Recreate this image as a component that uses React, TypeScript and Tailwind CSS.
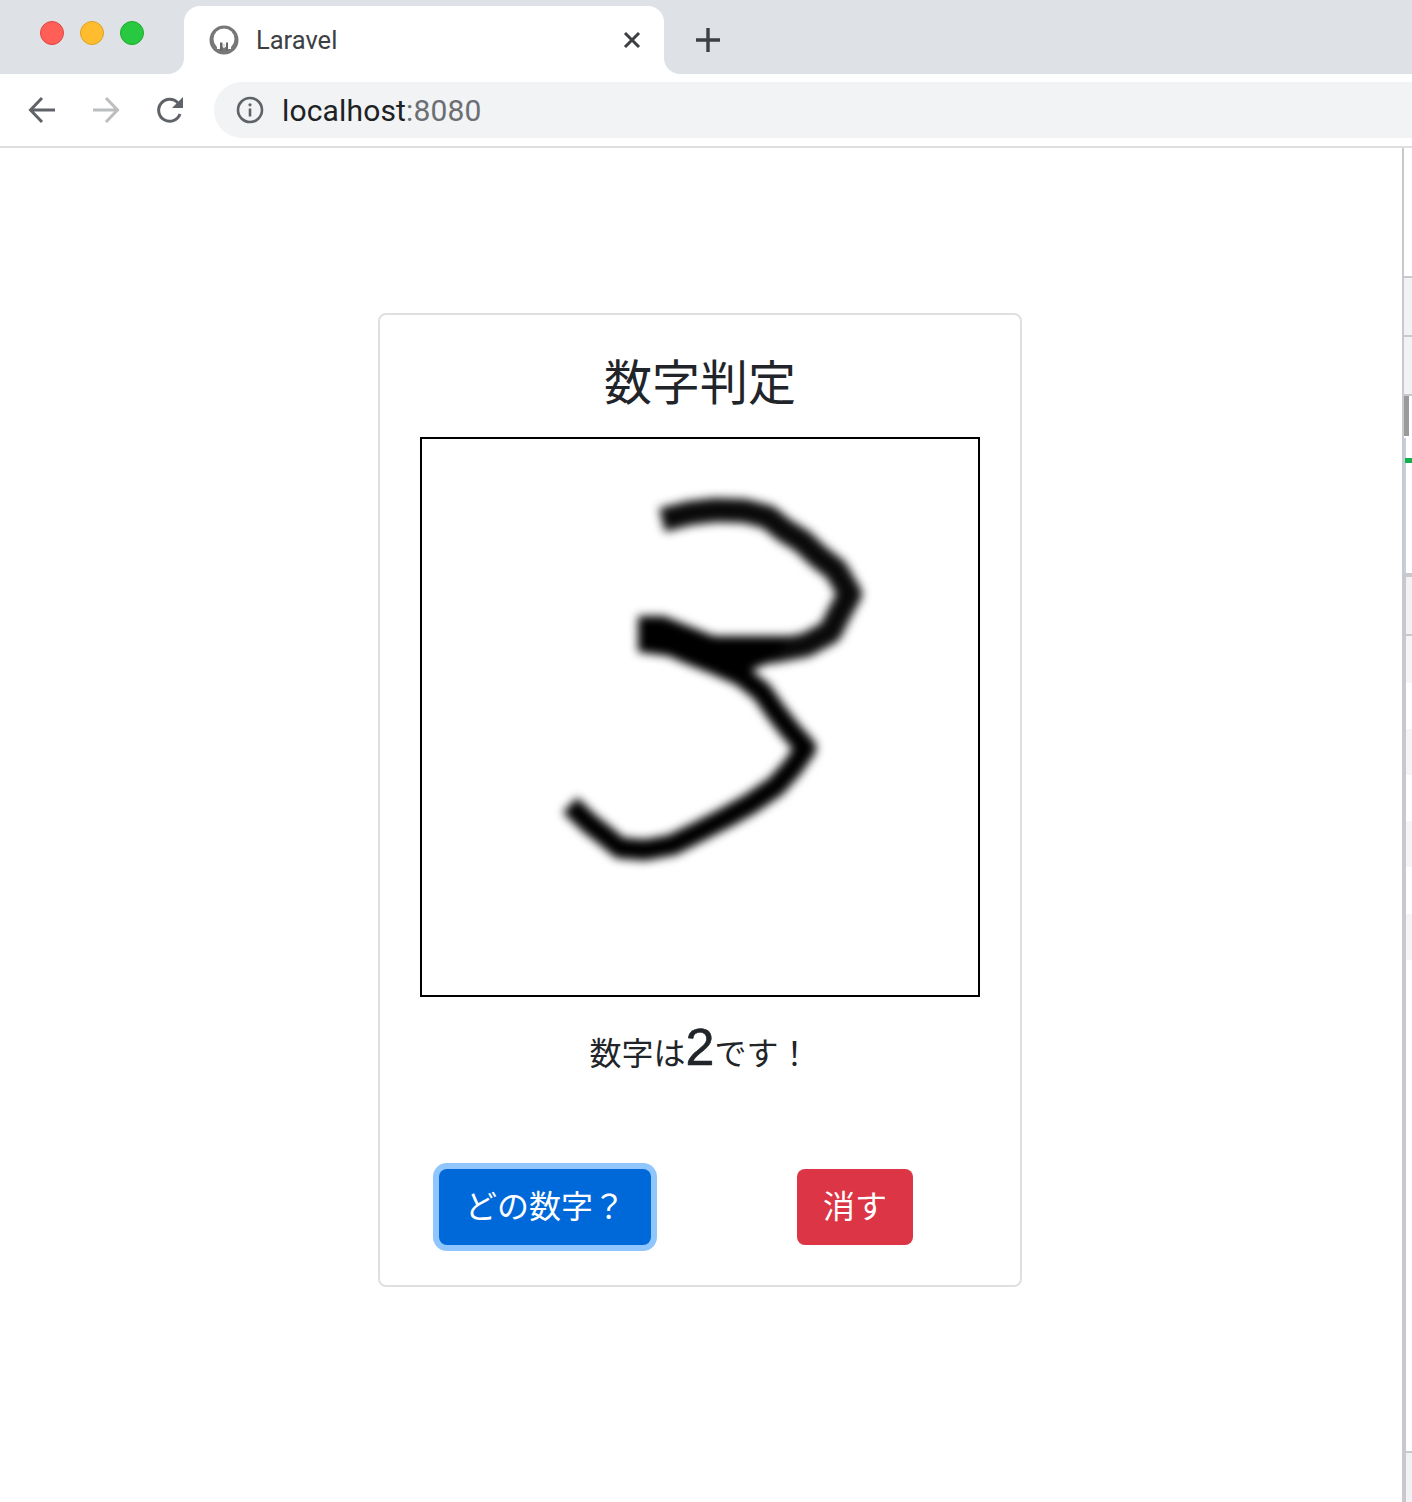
const sansJp = "font-['Liberation_Sans','Noto_Sans_CJK_JP',sans-serif]";

const Favicon = () => (
  <svg width="32" height="32" viewBox="0 0 32 32" className="blur-[0.5px]">
    <circle cx="16" cy="16" r="14.500" fill="#777" />
    <circle cx="16" cy="15" r="10.500" fill="#fff" />
    <path d="M6 23h20l-2 4-8 2-8-2z" fill="#777" />
    <path d="M9 19h3v6H9zM20 19h3v6h-3z" fill="#fff" />
    <path d="M12 18.500h2.500v8H12zM18 18.500h2v8h-2z" fill="#666" />
    <path d="M15 20h2v4h-2z" fill="#ddd" />
  </svg>
);

const ArrowLeft = () => (
  <svg width="28" height="28" viewBox="0 0 28 28" fill="none" stroke="#5f6368" strokeWidth="3">
    <path d="M27 14H3M14 2 2.500 14 14 26" />
  </svg>
);

const ArrowRight = () => (
  <svg width="28" height="28" viewBox="0 0 28 28" fill="none" stroke="#bcbdbf" strokeWidth="3">
    <path d="M1 14h24M14 2l11.500 12L14 26" />
  </svg>
);

const Reload = () => (
  <svg width="28" height="28" viewBox="0 0 28 28" fill="none">
    <path d="M24 18a11 11 0 1 1-2-11" stroke="#5f6368" strokeWidth="3" />
    <path d="M27 1v11H16z" fill="#5f6368" />
  </svg>
);

const Info = () => (
  <svg width="28" height="28" viewBox="0 0 28 28" fill="none">
    <circle cx="14" cy="14" r="12" stroke="#5f6368" strokeWidth="2.600" />
    <path d="M14 12.500V20.500" stroke="#5f6368" strokeWidth="2.600" />
    <circle cx="14" cy="8.800" r="1.600" fill="#5f6368" />
  </svg>
);

const HandwrittenThree = () => (
  <svg width="556" height="556" viewBox="422 439 556 556" fill="none" className="blur-[5px]">
    <polyline
      points="662,520 690,513 716,510 745,511 768,517 784,530 802,541 818,556 836,570 850,594 840,612 830,632 806,645 775,651 747,652 715,651 690,646 650,634"
      stroke="#0a0a0a"
      strokeWidth="24"
      strokeLinejoin="round"
    />
    <polyline
      points="650,636 685,652 715,664 742,676 762,692 776,712 790,730 806,748 792,768 776,786 750,804 725,818 698,832 672,845 645,850 620,848 603,834 590,824 570,805"
      stroke="#000"
      strokeWidth="21"
      strokeLinejoin="round"
    />
    <path d="M638 616h26l50 20 76 0-18 26-36 14-36-16-62-8z" fill="#000" />
  </svg>
);

const SideRail = () => (
  <div className="w-[12px] pl-[2px] flex flex-col">
    <div className="h-[128px] border-l-[2px] border-[#c8c9ce]" />
    <div className="h-[59px] border-l-[2px] border-t-[2px] border-[#c8c9ce] bg-[#f1f2f4]" />
    <div className="h-[59px] border-l-[2px] border-t-[2px] border-[#c8c9ce] bg-[#f1f2f4]" />
    <div className="h-[42px] border-l-[2px] border-t-[2px] border-[#c8c9ce] pr-[3px]">
      <div className="h-[40px] bg-[#9a9a9a]" />
    </div>
    <div className="h-[137px] border-l-[2px] border-[#c8c9ce] pt-[2px]">
      <div className="h-[135px] border-l-[2px] border-[#c3cfe3] pt-[20px]">
        <div className="h-[5px] bg-[#0fb14d] -ml-[1px]" />
      </div>
    </div>
    <div className="flex-1 border-l-[4px] border-[#c8c9ce] flex flex-col">
      <div className="h-[4px] bg-[#c8c9ce]" />
      <div className="h-[57px] bg-[#f2f2f3]" />
      <div className="h-[2px] bg-[#c8c9ce]" />
      <div className="h-[47px] bg-[#f5f5f5]" />
      <div className="h-[46px]" />
      <div className="h-[46px] bg-[#f5f5f5]" />
      <div className="h-[46px]" />
      <div className="h-[46px] bg-[#f5f5f5]" />
      <div className="h-[47px]" />
      <div className="h-[46px] bg-[#f5f5f5]" />
      <div className="h-[491px]" />
      <div className="h-[2px] bg-[#c8c9ce]" />
      <div className="flex-1 bg-[#f1f2f4]" />
    </div>
  </div>
);

export default function App() {
  return (
    <div className={`w-[1412px] h-[1502px] bg-white overflow-hidden flex flex-col ${sansJp}`}>
      {/* tab strip */}
      <div className="h-[74px] bg-[#dee1e6] flex items-end shrink-0">
        <div className="w-[184px] h-[74px] flex gap-[16px] pl-[40px] pt-[21px]">
          <span className="w-[24px] h-[24px] rounded-full bg-[#ff5f57] border border-[#e0443e]" />
          <span className="w-[24px] h-[24px] rounded-full bg-[#febc2e] border border-[#dea123]" />
          <span className="w-[24px] h-[24px] rounded-full bg-[#28c840] border border-[#1aab29]" />
        </div>
        <div className="relative w-[480px] h-[68px] bg-white rounded-t-[16px] flex items-center pl-[24px] pr-[20px]">
          <div className="absolute -left-[16px] bottom-0 w-[16px] h-[16px] bg-white">
            <div className="w-full h-full bg-[#dee1e6] rounded-br-[16px]" />
          </div>
          <div className="absolute -right-[16px] bottom-0 w-[16px] h-[16px] bg-white">
            <div className="w-full h-full bg-[#dee1e6] rounded-bl-[16px]" />
          </div>
          <Favicon />
          <span className="ml-[16px] flex-1 text-[25.500px] text-[#3c4043] font-['Roboto',sans-serif]">Laravel</span>
          <svg width="24" height="24" viewBox="0 0 24 24" fill="none" stroke="#3c4043" strokeWidth="3">
            <path d="M5 5l14 14M19 5 5 19" />
          </svg>
        </div>
        <div className="ml-[30px] h-[68px] flex items-center">
          <svg width="28" height="28" viewBox="0 0 28 28" fill="none" stroke="#3c4043" strokeWidth="3.400">
            <path d="M14 2v24M2 14h24" />
          </svg>
        </div>
      </div>
      {/* toolbar */}
      <div className="h-[74px] bg-white border-b-[2px] border-[#dfdfdf] flex items-center shrink-0 pl-[28px]">
        <ArrowLeft />
        <div className="ml-[36px]">
          <ArrowRight />
        </div>
        <div className="ml-[36px]">
          <Reload />
        </div>
        <div className="ml-[30px] flex-1 h-[56px] bg-[#f1f3f4] rounded-l-[28px] flex items-center pl-[22px]">
          <Info />
          <span className="ml-[18px] text-[30px] tracking-[0.15px] text-[#202124] font-['Roboto',sans-serif]">
            localhost<span className="text-[#6b6e72]">:8080</span>
          </span>
        </div>
      </div>
      {/* page */}
      <div className="flex-1 flex min-h-0">
        <main className="w-[1400px] pt-[165px]">
          <div className="mx-auto w-[644px] h-[974px] border-[2px] border-[#dfdfdf] rounded-[8px] px-[40px] pt-[33px] text-[#212529]">
            <h1 className="text-[48px] leading-[72px] text-center font-normal">数字判定</h1>
            <div className="mt-[17px] w-[560px] h-[560px] border-[2px] border-black bg-white">
              <HandwrittenThree />
            </div>
            <p className="mt-[18px] h-[64px] leading-[64px] text-[32px] text-center">
              数字は<span className="text-[52px] [-webkit-text-stroke:0.6px_#212529]">2</span>です！
            </p>
            <div className="mt-[90px] -mx-[30px] grid grid-cols-2 justify-items-center">
              <button className="h-[76px] w-[212px] rounded-[8px] bg-[#0069d9] text-white text-[32px] ring-[6px] ring-[#90c5fd]">
                どの数字？
              </button>
              <button className="h-[76px] w-[116px] rounded-[8px] bg-[#dc3545] text-white text-[32px]">消す</button>
            </div>
          </div>
        </main>
        <SideRail />
      </div>
    </div>
  );
}
